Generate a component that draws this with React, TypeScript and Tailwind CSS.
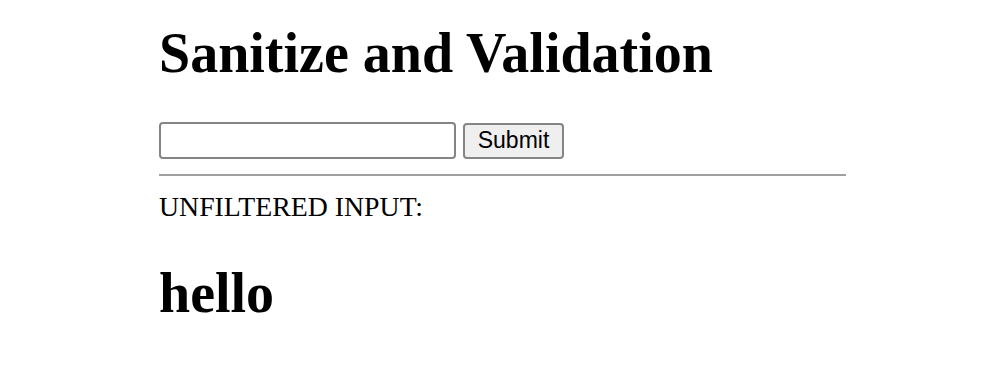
import React from "react";

export default function App() {
  return (
    <div className="bg-white w-[982px] h-[377px] overflow-hidden" style={{ fontFamily: '"Liberation Serif", "Times New Roman", serif' }}>
      <div className="ml-[159px] w-[687px] flex flex-col">
        <h1 className="mt-[22px] text-[56px] leading-[62px] font-bold text-black">Sanitize and Validation</h1>
        <div className="mt-[38px] flex items-center gap-[7px]">
          <input
            type="text"
            className="w-[297px] h-[37px] border-2 border-[#858585] rounded-[4px] bg-white outline-none"
          />
          <button
            className="w-[101px] h-[36px] border-2 border-[#858585] rounded-[4px] bg-[#efefef] text-black text-[23px] leading-none flex items-center justify-center"
            style={{ fontFamily: '"Liberation Sans", Arial, sans-serif' }}
          >
            Submit
          </button>
        </div>
        <div className="mt-[15px] h-[2px] bg-[#a0a0a0]" />
        <p className="mt-[15px] text-[27.8px] leading-[31px] text-black">UNFILTERED INPUT:</p>
        <h1 className="mt-[40px] text-[56px] leading-[62px] font-bold text-black">hello</h1>
      </div>
    </div>
  );
}
